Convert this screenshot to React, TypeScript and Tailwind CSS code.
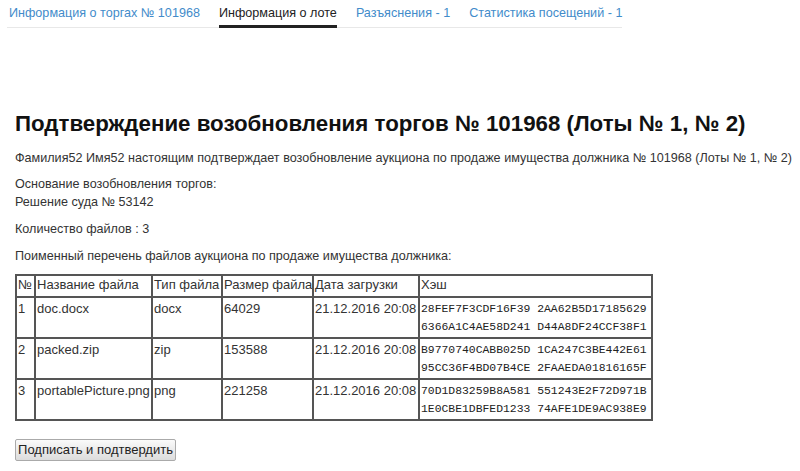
const tabs = [
  { label: "Информация о торгах № 101968", active: false },
  { label: "Информация о лоте", active: true },
  { label: "Разъяснения - 1", active: false },
  { label: "Статистика посещений - 1", active: false },
];

const files = [
  {
    n: 1,
    name: "doc.docx",
    type: "docx",
    size: "64029",
    date: "21.12.2016 20:08",
    hash: ["28FEF7F3CDF16F39 2AA62B5D17185629", "6366A1C4AE58D241 D44A8DF24CCF38F1"],
  },
  {
    n: 2,
    name: "packed.zip",
    type: "zip",
    size: "153588",
    date: "21.12.2016 20:08",
    hash: ["B9770740CABB025D 1CA247C3BE442E61", "95CC36F4BD07B4CE 2FAAEDA01816165F"],
  },
  {
    n: 3,
    name: "portablePicture.png",
    type: "png",
    size: "221258",
    date: "21.12.2016 20:08",
    hash: ["70D1D83259B8A581 551243E2F72D971B", "1E0CBE1DBFED1233 74AFE1DE9AC938E9"],
  },
];

const cell = "border-2 border-[#555] px-[1px] align-top text-left font-normal whitespace-nowrap overflow-hidden";

export default function App() {
  return (
    <div className="min-h-[471px] bg-white font-['Liberation_Sans',Arial,sans-serif] text-[12.6px] leading-[18px] text-[#333]">
      <div className="ml-[7px] inline-flex gap-[19px] border-b border-[#e8e8e8] pl-[2px] pt-[4px]">
        {tabs.map((t) => (
          <div
            key={t.label}
            className={[
              "-mb-px pb-[3px]",
              t.active ? "border-b-[3px] border-[#222] text-[#222]" : "border-b-[3px] border-transparent text-[#428bca]",
            ].join(" ")}
          >
            {t.label}
          </div>
        ))}
      </div>

      <div className="pl-[15px] pt-[83px]">
        <h1 className="whitespace-nowrap text-[22.3px] font-bold leading-[26px] text-[#111]">
          Подтверждение возобновления торгов № 101968 (Лоты № 1, № 2)
        </h1>
        <p className="mt-[12px] whitespace-nowrap">
          Фамилия52 Имя52 настоящим подтверждает возобновление аукциона по продаже имущества должника № 101968 (Лоты № 1, № 2)
        </p>
        <p className="mt-[8px]">
          Основание возобновления торгов:
          <br />
          Решение суда № 53142
        </p>
        <p className="mt-[9px]">Количество файлов : 3</p>
        <p className="mt-[9px]">Поименный перечень файлов аукциона по продаже имущества должника:</p>

        <table className="mt-[9px] w-[636px] table-fixed border-collapse border-2 border-[#555] text-[13px]">
          <colgroup>
            <col className="w-[19px]" />
            <col className="w-[117px]" />
            <col className="w-[70px]" />
            <col className="w-[91px]" />
            <col className="w-[106px]" />
            <col className="w-[233px]" />
          </colgroup>
          <thead>
            <tr className="h-[22px]">
              <th className={cell}>№</th>
              <th className={cell}>Название файла</th>
              <th className={cell}>Тип файла</th>
              <th className={cell}>Размер файла</th>
              <th className={cell}>Дата загрузки</th>
              <th className={cell}>Хэш</th>
            </tr>
          </thead>
          <tbody>
            {files.map((f) => (
              <tr key={f.n} className="h-[41px]">
                <td className={cell + " pt-[2px]"}>{f.n}</td>
                <td className={cell + " pt-[2px]"}>{f.name}</td>
                <td className={cell + " pt-[2px]"}>{f.type}</td>
                <td className={cell + " pt-[2px]"}>{f.size}</td>
                <td className={cell + " pt-[2px]"}>{f.date}</td>
                <td className={cell + " pt-[2px] font-['Liberation_Mono',monospace] text-[11.4px] text-[#222]"}>
                  {f.hash.map((h) => (
                    <div key={h} className="whitespace-pre">
                      {h}
                    </div>
                  ))}
                </td>
              </tr>
            ))}
          </tbody>
        </table>

        <button
          type="button"
          className="mt-[18px] h-[22px] w-[161px] rounded-[2px] border border-[#aaa] bg-gradient-to-b from-[#fafafa] to-[#dcdcdc] text-[13px] text-[#222]"
        >
          Подписать и подтвердить
        </button>
      </div>
    </div>
  );
}
